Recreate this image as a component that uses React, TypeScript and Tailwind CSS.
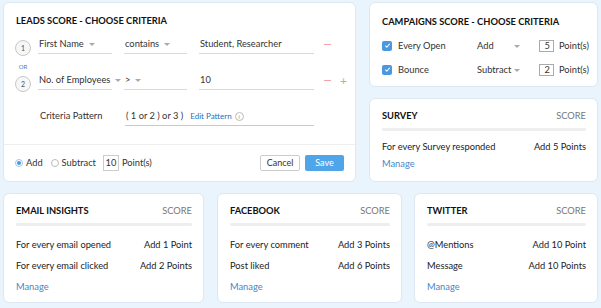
import React from "react";

const Caret: React.FC<{ ml?: string }> = ({ ml = "ml-[5px]" }) => (
  <span className={`inline-block shrink-0 w-0 h-0 border-l-[3px] border-r-[3px] border-t-[3px] border-l-transparent border-r-transparent border-t-[#aaaaaa] ${ml} mt-[1px]`} />
);

const Field: React.FC<{ w: string; text: string; caret?: boolean }> = ({ w, text, caret }) => (
  <div className={`${w} h-[19px] border-b border-[#d9d9d9] flex items-center pl-[1px] text-[#333] whitespace-nowrap`}>
    <span>{text}</span>
    {caret && <Caret />}
  </div>
);

const Num: React.FC<{ n: number }> = ({ n }) => (
  <div className="shrink-0 w-[16px] h-[16px] rounded-full border border-[#c8c8c8] bg-[#f7f7f7] flex items-center justify-center text-[7px] text-[#555] mt-[5px]">
    {n}
  </div>
);

const Check: React.FC = () => (
  <div className="shrink-0 w-[10px] h-[10px] rounded-[2px] bg-[#4b97e0] flex items-center justify-center">
    <svg width="7" height="7" viewBox="0 0 8 8">
      <path d="M1.5 4.2 L3.3 6 L6.6 2" stroke="white" strokeWidth="1.3" fill="none" />
    </svg>
  </div>
);

const ScoreCard: React.FC<{
  title: string;
  rows: [string, string][];
  w: string;
  rowGap: string;
  firstGap: string;
}> = ({ title, rows, w, rowGap, firstGap }) => (
  <div className={`${w} bg-white rounded-md border border-[#dde8f2] pl-[12px] pr-[11px] pt-[10px]`}>
    <div className="flex justify-between leading-[14px]">
      <span className="font-bold text-[#111]">{title}</span>
      <span className="text-[#777]">SCORE</span>
    </div>
    <div className="h-[3px] bg-[#eeeeee] rounded-full mt-[5px]" />
    <div className={`flex flex-col ${firstGap} ${rowGap}`}>
      {rows.map(([a, b]) => (
        <div key={a} className="flex justify-between leading-[14px] text-[#222]">
          <span>{a}</span>
          <span>{b}</span>
        </div>
      ))}
      <span className="leading-[14px] text-[#4a86c4]">Manage</span>
    </div>
  </div>
);

export default function App() {
  return (
    <div
      className="w-[601px] h-[308px] bg-[#eaf4fc] pl-[3px] pr-[3px] pt-[2px] text-[9.3px]"
      style={{ fontFamily: "Lato, 'Open Sans', sans-serif" }}
    >
      <div className="flex gap-[13px]">
        {/* leads score */}
        <div className="w-[353px] h-[180px] bg-white rounded-md border border-[#dde8f2] flex flex-col">
          <div className="pl-[11px] pr-[11px] pt-[11px]">
            <h2 className="font-bold text-[#111] leading-[14px] pl-[1px]">LEADS SCORE - CHOOSE CRITERIA</h2>
            <div className="flex items-start mt-[7px]">
              <Num n={1} />
              <div className="ml-[7px]">
                <Field w="w-[74px]" text="First Name" caret />
              </div>
              <div className="ml-[12px]">
                <Field w="w-[63px]" text="contains" caret />
              </div>
              <div className="ml-[12px]">
                <Field w="w-[115px]" text="Student, Researcher" />
              </div>
              <div className="ml-[10px] h-[19px] flex items-center">
                <span className="w-[7px] h-[1px] bg-[#f1a4ad]" />
              </div>
            </div>
            <div className="h-[15px] flex items-end">
              <span className="text-[6px] leading-[8px] text-[#3f7fc0] w-[16px] text-center">OR</span>
            </div>
            <div className="flex items-start">
              <Num n={2} />
              <div className="ml-[7px]">
                <Field w="w-[74px]" text="No. of Employees" caret />
              </div>
              <div className="ml-[12px]">
                <Field w="w-[63px]" text=">" caret />
              </div>
              <div className="ml-[12px]">
                <Field w="w-[115px]" text="10" />
              </div>
              <div className="ml-[10px] h-[19px] flex items-center gap-[9px]">
                <span className="w-[7px] h-[1px] bg-[#f1a4ad]" />
                <span className="text-[#9fc46a] text-[12px] leading-[12px]">+</span>
              </div>
            </div>
            <div className="flex items-start mt-[15px]">
              <span className="w-[110px] pl-[25px] h-[18px] flex items-center text-[#333] whitespace-nowrap">Criteria Pattern</span>
              <div className="w-[189px] h-[19px] border-b border-[#a9d1f0] flex items-center pl-[1px] whitespace-nowrap">
                <span className="text-[#333]">( 1 or 2 ) or 3 )</span>
                <span className="ml-[7px] text-[8px] text-[#1f6fbf]">Edit Pattern</span>
                <span className="ml-[3px] w-[9px] h-[9px] rounded-full border border-[#bbbbbb] text-[6px] leading-[7px] text-[#999] flex items-center justify-center">
                  i
                </span>
              </div>
            </div>
          </div>
          <div className="h-[1px] bg-[#eeeeee] mt-[18px]" />
          <div className="flex items-center justify-between pl-[11px] pr-[11px] mt-[10px]">
            <div className="flex items-center text-[#333] whitespace-nowrap">
              <span className="w-[8px] h-[8px] rounded-full border border-[#9cc6ea] flex items-center justify-center">
                <span className="w-[4px] h-[4px] rounded-full bg-[#4b97e0]" />
              </span>
              <span className="ml-[3px]">Add</span>
              <span className="ml-[8px] w-[8px] h-[8px] rounded-full border border-[#bbbbbb]" />
              <span className="ml-[3px]">Subtract</span>
              <span className="ml-[7px] w-[16px] h-[16px] border border-[#cccccc] flex items-center justify-center">10</span>
              <span className="ml-[3px]">Point(s)</span>
            </div>
            <div className="flex items-center gap-[5px]">
              <button className="w-[40px] h-[16px] border border-[#cccccc] rounded-[2px] bg-white text-[#333] text-[9px]">Cancel</button>
              <button className="w-[39px] h-[16px] rounded-[2px] bg-[#4fa5ea] text-white text-[9px]">Save</button>
            </div>
          </div>
        </div>

        {/* right column */}
        <div className="flex-1 flex flex-col gap-[11px]">
          <div className="h-[85px] bg-white rounded-md border border-[#dde8f2] pl-[12px] pr-[8px] pt-[12px]">
            <h2 className="font-bold text-[#111] leading-[14px]">CAMPAIGNS SCORE - CHOOSE CRITERIA</h2>
            <div className="flex items-center mt-[10px] text-[#333] whitespace-nowrap">
              <Check />
              <span className="ml-[6px] w-[79px]">Every Open</span>
              <span className="w-[34px]">Add</span>
              <Caret ml="ml-[3px]" />
              <span className="ml-[19px] w-[15px] h-[12px] border border-[#aaaaaa] flex items-center justify-end pr-[3px]">5</span>
              <span className="ml-[5px]">Point(s)</span>
            </div>
            <div className="flex items-center mt-[10px] text-[#333] whitespace-nowrap">
              <Check />
              <span className="ml-[6px] w-[79px]">Bounce</span>
              <span className="w-[34px]">Subtract</span>
              <Caret ml="ml-[3px]" />
              <span className="ml-[19px] w-[15px] h-[12px] border border-[#aaaaaa] flex items-center justify-end pr-[3px]">2</span>
              <span className="ml-[5px]">Point(s)</span>
            </div>
          </div>
          <ScoreCard
            w="h-[84px]"
            title="SURVEY"
            rows={[["For every Survey responded", "Add 5 Points"]]}
            firstGap="mt-[9px]"
            rowGap="gap-[3px]"
          />
        </div>
      </div>

      <div className="flex mt-[11px] h-[110px]">
        <ScoreCard
          w="w-[201px]"
          title="EMAIL INSIGHTS"
          rows={[
            ["For every email opened", "Add 1 Point"],
            ["For every email clicked", "Add 2 Points"],
          ]}
          firstGap="mt-[12px]"
          rowGap="gap-[7px]"
        />
        <div className="w-[13px]" />
        <ScoreCard
          w="w-[185px]"
          title="FACEBOOK"
          rows={[
            ["For every comment", "Add 3 Points"],
            ["Post liked", "Add 6 Points"],
          ]}
          firstGap="mt-[12px]"
          rowGap="gap-[7px]"
        />
        <div className="w-[12px]" />
        <ScoreCard
          w="flex-1"
          title="TWITTER"
          rows={[
            ["@Mentions", "Add 10 Point"],
            ["Message", "Add 10 Points"],
          ]}
          firstGap="mt-[12px]"
          rowGap="gap-[7px]"
        />
      </div>
    </div>
  );
}
